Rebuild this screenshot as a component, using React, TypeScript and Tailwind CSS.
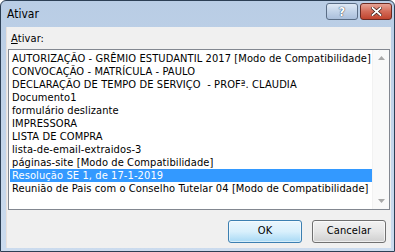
import React from 'react'

const itens = [
  'AUTORIZAÇÃO - GRÊMIO ESTUDANTIL 2017 [Modo de Compatibilidade]',
  'CONVOCAÇÃO - MATRÍCULA - PAULO',
  'DECLARAÇÃO DE TEMPO DE SERVIÇO  - PROFª. CLAUDIA',
  'Documento1',
  'formulário deslizante',
  'IMPRESSORA',
  'LISTA DE COMPRA',
  'lista-de-email-extraidos-3',
  'páginas-site [Modo de Compatibilidade]',
  'Resolução SE 1, de 17-1-2019',
  'Reunião de Pais com o Conselho Tutelar 04 [Modo de Compatibilidade]',
]

const fonte = { fontFamily: 'Tahoma, "DejaVu Sans Condensed", "DejaVu Sans", sans-serif' }

function Seta({ baixo }: { baixo?: boolean }) {
  return (
    <svg width="7" height="4" viewBox="0 0 7 4" className="block">
      {baixo
        ? <path d="M0 0 H7 L3.5 4 Z" fill="#a8a8a8" />
        : <path d="M0 4 H7 L3.5 0 Z" fill="#a8a8a8" />}
    </svg>
  )
}

export default function App() {
  const selecionado = 9

  return (
    <div className="w-[395px] h-[252px] flex flex-col rounded-t-[6px] border border-[#2c3f55] bg-gradient-to-b from-[#b9cde5] to-[#cbdbee] overflow-hidden text-black" style={fonte}>
      {/* barra de título */}
      <div className="h-[26px] flex items-center pl-[6px] pr-[2px]">
        <span className="text-[12px] leading-none">Ativar</span>
        <div className="ml-auto flex gap-[2px] self-start mt-[2px]">
          <div className="w-[32px] h-[17px] rounded-[3px] border border-[#5a6d85] bg-gradient-to-b from-[#dfe9f5] via-[#c2d3e8] to-[#aabfdb] flex items-center justify-center">
            <span className="text-[13px] font-bold leading-none text-white" style={{ textShadow: '0 0 1px #2a3c55, 0 0 1px #2a3c55' }}>?</span>
          </div>
          <div className="w-[32px] h-[17px] rounded-[3px] border border-[#6b2a22] bg-gradient-to-b from-[#e6a396] via-[#d36a57] to-[#c0442e] flex items-center justify-center">
            <svg width="11" height="9" viewBox="0 0 11 9">
              <path d="M1.5 1 L9.5 8 M9.5 1 L1.5 8" stroke="#3b1a15" strokeWidth="3.2" strokeLinecap="square" />
              <path d="M1.5 1 L9.5 8 M9.5 1 L1.5 8" stroke="#ffffff" strokeWidth="1.8" strokeLinecap="square" />
            </svg>
          </div>
        </div>
      </div>

      {/* área cliente */}
      <div className="flex-1 ml-[5px] mr-[3px] mb-[3px] bg-[#f0f0f0] border-l border-[#e8e0dc] flex flex-col pl-[1px] pr-[1px] text-[11px] tracking-[0.1px]">
        <div className="mt-[5px] pl-[3px] leading-[13px]">
          <span className="underline">A</span>tivar:
        </div>
        <div className="mt-[4px] h-[161px] border border-[#828790] bg-white flex">
          <div className="flex-1 pt-[2px] pl-[1px]">
            {itens.map((t, i) => (
              <div
                key={t}
                className={
                  'h-[13px] leading-[13px] pl-[2px] whitespace-pre ' +
                  (i === selecionado ? 'bg-[#3399ff] text-white' : '')
                }
              >
                {t}
              </div>
            ))}
          </div>
          <div className="w-[17px] bg-[#f9f9f9] border-l border-[#f2f2f2] flex flex-col items-center justify-between py-[6px]">
            <Seta />
            <Seta baixo />
          </div>
        </div>
        <div className="mt-[10px] flex justify-end gap-[10px] pr-[4px]">
          <button className="w-[74px] h-[23px] rounded-[3px] border border-[#3c7fb1] bg-gradient-to-b from-[#eaf6fd] via-[#d9f0fc] to-[#a7d9f5] shadow-[inset_0_0_0_1px_#ffffff80]">
            OK
          </button>
          <button className="w-[74px] h-[23px] rounded-[3px] border border-[#707070] bg-gradient-to-b from-[#f2f2f2] via-[#e6e6e6] to-[#cfcfcf] shadow-[inset_0_0_0_1px_#ffffffa0]">
            Cancelar
          </button>
        </div>
      </div>
    </div>
  )
}
